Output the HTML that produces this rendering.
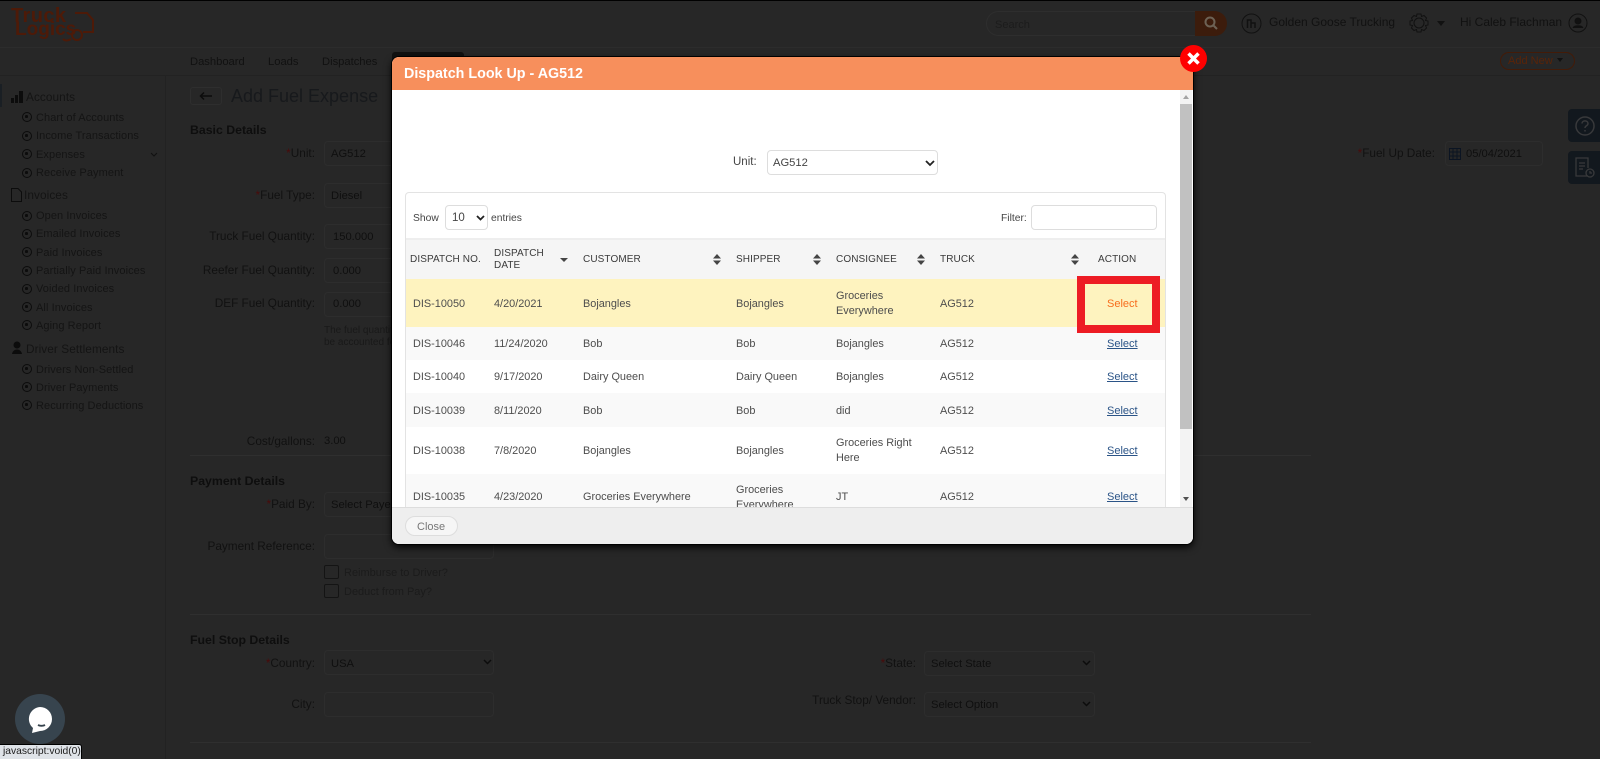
<!DOCTYPE html>
<html><head><meta charset="utf-8"><title>Dispatch Look Up</title>
<style>
html,body{margin:0;padding:0;width:1600px;height:759px;overflow:hidden;background:#272727}
body{position:relative;font-family:"Liberation Sans",sans-serif;font-size:12px;color:#111}
.a{position:absolute;box-sizing:border-box}
.t{position:absolute;white-space:nowrap;line-height:14px;font-size:11.5px;transform:translateY(1px)}
.r{text-align:right}
.f{position:absolute;box-sizing:border-box;border:1px solid #2d2d2d;border-radius:4px;height:25px}
.s{color:#141414;font-size:11px;letter-spacing:.08px}
.d{color:#0f0f0f;font-size:11.2px}
.g{color:#111;font-size:11.8px}
.h{color:#0e0e0e;font-weight:bold;font-size:12.3px}
.o{position:absolute;left:22px;width:10px;height:10px;border:1.5px solid #0c0c0c;border-radius:50%;box-sizing:border-box}
.o:after{content:"";position:absolute;left:2.2px;top:2.2px;width:2.6px;height:2.6px;background:#0c0c0c;border-radius:50%}
.l{position:absolute;height:1px;background:#2f2f2f}
.m{color:#4d4d4d;font-size:10.9px}
.th{color:#3a3a3a;font-size:10px;letter-spacing:.1px}
.sel{color:#2b5487;text-decoration:underline;font-size:11px}
.row{position:absolute;left:406px;width:759px}
</style></head><body>
<div class="a" style="left:0;top:0;width:1600px;height:1px;background:#000"></div>
<div class="l" style="left:0;top:47px;width:1600px;background:#2c2c2c"></div>
<div class="l" style="left:0;top:75px;width:1600px;background:#222"></div>
<div class="a" style="left:165px;top:75px;width:1px;height:684px;background:#222"></div>
<div class="a" style="left:0;top:84px;width:2px;height:23px;background:#1a1f24"></div>

<!-- logo -->
<svg class="a" style="left:8px;top:3px" width="90" height="42" viewBox="0 0 90 42" fill="none">
<path d="M67 10H79L85 17V29H75M55 36C57 38 60 38 63 36" stroke="#4d1a08" stroke-width="2"/>
<circle cx="69" cy="32" r="5" stroke="#4d1a08" stroke-width="2"/>
<text x="3" y="19" font-family="Liberation Sans" font-size="20" font-weight="bold" fill="#4d1a08" letter-spacing=".4">Truck</text>
<text x="7" y="32" font-family="Liberation Sans" font-size="19" font-weight="bold" fill="#4d1a08">Logics</text>
</svg>

<!-- header right -->
<div class="a" style="left:986px;top:11px;width:210px;height:25px;border:1px solid #2e2e2e;border-radius:13px 0 0 13px"></div>
<div class="t" style="left:995px;top:17px;color:#1c1c1c;font-size:11px">Search</div>
<div class="a" style="left:1195px;top:11px;width:32px;height:25px;background:#3c1c0c;border-radius:0 13px 13px 0"></div>
<svg class="a" style="left:1203px;top:15px" width="16" height="16" viewBox="0 0 16 16" fill="none" stroke="#6d6255" stroke-width="2"><circle cx="7" cy="7" r="4.500"/><path d="M10.500 10.500L14 14"/></svg>
<svg class="a" style="left:1241px;top:13px" width="21" height="21" viewBox="0 0 21 21" fill="none" stroke="#111"><circle cx="10.500" cy="10.500" r="9.500"/><path d="M6.500 15V7H10V15M10 10H14V15" stroke-width="1.500"/></svg>
<div class="t" style="left:1269px;top:14px;font-size:12px;color:#111">Golden Goose Trucking</div>
<svg class="a" style="left:1408px;top:12px" width="22" height="22" viewBox="0 0 22 22" fill="none" stroke="#111"><circle cx="11" cy="11" r="5"/><path d="M9 2H13L13.500 4.500L16 3.500L18.500 6L17.500 8.500L20 9V13L17.500 13.500L18.500 16L16 18.500L13.500 17.500L13 20H9L8.500 17.500L6 18.500L3.500 16L4.500 13.500L2 13V9L4.500 8.500L3.500 6L6 3.500L8.500 4.500Z"/></svg>
<div class="a" style="left:1437px;top:21px;border:4px solid transparent;border-top:5px solid #111"></div>
<div class="t" style="left:1460px;top:14px;font-size:12px;color:#111">Hi Caleb Flachman</div>
<svg class="a" style="left:1568px;top:13px" width="20" height="20" viewBox="0 0 20 20" fill="none" stroke="#111"><circle cx="10" cy="10" r="9"/><circle cx="10" cy="8" r="3" fill="#111"/><path d="M5 15C6 12 14 12 15 15" fill="#111"/></svg>

<!-- nav -->
<div class="t" style="left:190px;top:54px;color:#111;font-size:11.2px">Dashboard</div>
<div class="t" style="left:268px;top:54px;color:#111;font-size:11.2px">Loads</div>
<div class="t" style="left:322px;top:54px;color:#111;font-size:11.2px">Dispatches</div>
<div class="a" style="left:392px;top:52px;width:72px;height:23px;background:#111;border-radius:3px 3px 0 0"></div>
<div class="a" style="left:1500px;top:52px;width:75px;height:18px;border:1px solid #431b08;border-radius:9px"></div>
<div class="t" style="left:1508px;top:53px;color:#5a2408;font-size:11px">Add New</div>
<div class="a" style="left:1557px;top:58px;border:3.500px solid transparent;border-top:4px solid #111"></div>

<!-- sidebar -->
<svg class="a" style="left:11px;top:90px" width="13" height="13" viewBox="0 0 13 13" fill="#0c0c0c"><path d="M0 13V8H3V13ZM4 13V5H7V13ZM8 13V1H12V13Z"/></svg>
<div class="t s" style="left:26px;top:89px;font-size:11.800px">Accounts</div>
<i class="o" style="top:112px"></i><div class="t s" style="left:36px;top:110px">Chart of Accounts</div>
<i class="o" style="top:131px"></i><div class="t s" style="left:36px;top:128px">Income Transactions</div>
<i class="o" style="top:149px"></i><div class="t s" style="left:36px;top:147px">Expenses</div>
<svg class="a" style="left:150px;top:152px" width="8" height="6" fill="none" stroke="#111"><path d="M1 1L4 4L7 1"/></svg>
<i class="o" style="top:168px"></i><div class="t s" style="left:36px;top:165px">Receive Payment</div>
<svg class="a" style="left:11px;top:188px" width="11" height="14" fill="none" stroke="#0c0c0c"><path d="M.5.5H7L10.500 4V13.500H.5Z"/></svg>
<div class="t s" style="left:24px;top:187px;font-size:11.800px">Invoices</div>
<i class="o" style="top:211px"></i><div class="t s" style="left:36px;top:208px">Open Invoices</div>
<i class="o" style="top:229px"></i><div class="t s" style="left:36px;top:226px">Emailed Invoices</div>
<i class="o" style="top:247px"></i><div class="t s" style="left:36px;top:245px">Paid Invoices</div>
<i class="o" style="top:266px"></i><div class="t s" style="left:36px;top:263px">Partially Paid Invoices</div>
<i class="o" style="top:284px"></i><div class="t s" style="left:36px;top:281px">Voided Invoices</div>
<i class="o" style="top:302px"></i><div class="t s" style="left:36px;top:300px">All Invoices</div>
<i class="o" style="top:320px"></i><div class="t s" style="left:36px;top:318px">Aging Report</div>
<svg class="a" style="left:11px;top:341px" width="13" height="13" fill="#0c0c0c"><circle cx="6" cy="4" r="3.500"/><path d="M1 13C2 7 10 7 11 13Z"/></svg>
<div class="t s" style="left:26px;top:341px;font-size:11.800px">Driver Settlements</div>
<i class="o" style="top:364px"></i><div class="t s" style="left:36px;top:362px">Drivers Non-Settled</div>
<i class="o" style="top:382px"></i><div class="t s" style="left:36px;top:380px">Driver Payments</div>
<i class="o" style="top:400px"></i><div class="t s" style="left:36px;top:398px">Recurring Deductions</div>

<!-- form -->
<div class="a" style="left:190px;top:87px;width:32px;height:18px;border:1px solid #2e2e2e;border-radius:3px"></div>
<svg class="a" style="left:199px;top:91px" width="14" height="10" fill="none" stroke="#0c0c0c" stroke-width="1.500"><path d="M13 5H2M5 1.500L1.500 5L5 8.500"/></svg>
<div class="t" style="left:231px;top:84px;font-size:18px;line-height:22px;color:#17191c">Add Fuel Expense</div>
<div class="t h" style="left:190px;top:122px">Basic Details</div>

<div class="t g r" style="right:1285px;top:145px"><span style="color:#4a0b0b">*</span>Unit:</div><div class="f" style="left:324px;top:141px;width:170px"></div><div class="t d" style="left:331px;top:146px">AG512</div>
<div class="t g r" style="right:1285px;top:187px"><span style="color:#4a0b0b">*</span>Fuel Type:</div><div class="f" style="left:324px;top:183px;width:170px"></div><div class="t d" style="left:331px;top:188px">Diesel</div>
<div class="t g r" style="right:1285px;top:228px">Truck Fuel Quantity:</div><div class="f" style="left:324px;top:224px;width:170px"></div><div class="t d" style="left:333px;top:229px">150.000</div>
<div class="t g r" style="right:1285px;top:262px">Reefer Fuel Quantity:</div><div class="f" style="left:324px;top:258px;width:170px"></div><div class="t d" style="left:333px;top:263px">0.000</div>
<div class="t g r" style="right:1285px;top:295px">DEF Fuel Quantity:</div><div class="f" style="left:324px;top:292px;width:170px"></div><div class="t d" style="left:333px;top:296px">0.000</div>
<div class="t" style="left:324px;top:323px;font-size:10px;color:#191919">The fuel quantity</div>
<div class="t" style="left:324px;top:335px;font-size:10px;color:#191919">be accounted for</div>
<div class="t g r" style="right:1285px;top:433px">Cost/gallons:</div><div class="t d" style="left:324px;top:433px">3.00</div>
<div class="l" style="left:190px;top:455px;width:1121px"></div>
<div class="t h" style="left:190px;top:473px">Payment Details</div>
<div class="t g r" style="right:1285px;top:496px"><span style="color:#4a0b0b">*</span>Paid By:</div><div class="f" style="left:324px;top:492px;width:170px"></div><div class="t d" style="left:331px;top:497px">Select Payer</div>
<div class="t g r" style="right:1285px;top:538px">Payment Reference:</div><div class="f" style="left:324px;top:534px;width:170px"></div>
<div class="a" style="left:324px;top:565px;width:15px;height:14px;border:1px solid #141414;border-radius:2px"></div><div class="t" style="left:344px;top:565px;color:#1b1b1b;font-size:11px">Reimburse to Driver?</div>
<div class="a" style="left:324px;top:584px;width:15px;height:14px;border:1px solid #141414;border-radius:2px"></div><div class="t" style="left:344px;top:584px;color:#1b1b1b;font-size:11px">Deduct from Pay?</div>
<div class="l" style="left:190px;top:614px;width:1121px"></div>
<div class="t h" style="left:190px;top:632px">Fuel Stop Details</div>
<div class="t g r" style="right:1285px;top:655px"><span style="color:#4a0b0b">*</span>Country:</div><div class="f" style="left:324px;top:650px;width:170px"></div><div class="t d" style="left:331px;top:656px">USA</div>
<svg class="a" style="left:483px;top:659px" width="9" height="6" fill="none" stroke="#0c0c0c" stroke-width="1.500"><path d="M1 1L4.500 4.500L8 1"/></svg>
<div class="t g r" style="right:1285px;top:696px">City:</div><div class="f" style="left:324px;top:692px;width:170px"></div>
<div class="l" style="left:190px;top:742px;width:1121px"></div>
<div class="t g r" style="right:684px;top:655px"><span style="color:#4a0b0b">*</span>State:</div><div class="f" style="left:924px;top:651px;width:171px"></div><div class="t d" style="left:931px;top:656px">Select State</div>
<svg class="a" style="left:1082px;top:660px" width="9" height="6" fill="none" stroke="#0c0c0c" stroke-width="1.500"><path d="M1 1L4.500 4.500L8 1"/></svg>
<div class="t g r" style="right:684px;top:692px">Truck Stop/ Vendor:</div><div class="f" style="left:924px;top:692px;width:171px"></div><div class="t d" style="left:931px;top:697px">Select Option</div>
<svg class="a" style="left:1082px;top:701px" width="9" height="6" fill="none" stroke="#0c0c0c" stroke-width="1.500"><path d="M1 1L4.500 4.500L8 1"/></svg>
<div class="t g r" style="right:165px;top:145px"><span style="color:#4a0b0b">*</span>Fuel Up Date:</div><div class="f" style="left:1445px;top:141px;width:98px"></div>
<svg class="a" style="left:1449px;top:148px" width="12" height="12" fill="none" stroke="#0b1422"><path d="M.5.5H11.500V11.500H.5ZM.5 4H11.500M.5 8H11.500M4 .5V11.500M8 .5V11.500"/></svg>
<div class="t d" style="left:1466px;top:146px">05/04/2021</div>
<div class="a" style="left:1568px;top:109px;width:32px;height:33px;background:#12181e;border-radius:4px 0 0 4px"></div>
<svg class="a" style="left:1574px;top:115px" width="22" height="22" fill="none" stroke="#38393b" stroke-width="1.500"><circle cx="11" cy="11" r="9"/><path d="M8 8.500C8 5 14 5 14 8.500C14 11 11 10.500 11 13M11 15V16.500"/></svg>
<div class="a" style="left:1568px;top:151px;width:32px;height:33px;background:#12181e;border-radius:4px 0 0 4px"></div>
<svg class="a" style="left:1574px;top:157px" width="22" height="22" fill="none" stroke="#38393b" stroke-width="1.300"><path d="M14 19H2V1H14V11M5 6H11M5 9H11M5 12H9"/><circle cx="16" cy="16" r="4"/><path d="M16 14V16H18"/></svg>

<!-- chat -->
<div class="a" style="left:15px;top:694px;width:50px;height:50px;border-radius:50%;background:#37444e"></div>
<svg class="a" style="left:27px;top:706px" width="26" height="28" viewBox="0 0 26 28"><path d="M13 1A12 12 0 1 1 13 25L5 27L6 22A12 12 0 0 1 13 1Z" fill="#fff"/><path d="M11 19C13 20 16 20 18 19" stroke="#37444e" stroke-width="2" fill="none"/></svg>
<div class="a" style="left:0;top:744px;width:82px;height:15px;background:#dfe3e8;border:1px solid #000;border-left:0;border-bottom:0;border-radius:0 3px 0 0"></div>
<div class="t" style="left:3px;top:744px;font-size:10.300px;color:#1d1d1d">javascript:void(0)</div>

<!-- modal -->
<div class="a" style="left:392px;top:57px;width:801px;height:487px;background:#fff;border-radius:7px;box-shadow:0 0 0 1px #000,0 3px 8px #000;overflow:hidden">
 <div class="a" style="left:0;top:0;width:801px;height:33px;background:#f78f5c"></div>
</div>
<div class="t" style="left:404px;top:65px;color:#fff;font-weight:bold;font-size:14.300px;line-height:17px">Dispatch Look Up - AG512</div>

<div class="a" style="left:1180px;top:90px;width:12px;height:417px;background:#f3f3f3"></div>
<div class="a" style="left:1180px;top:104px;width:12px;height:325px;background:#c1c1c1"></div>
<div class="a" style="left:1183px;top:95px;border:3px solid transparent;border-bottom:4px solid #a3a3a3;border-top:0"></div>
<div class="a" style="left:1183px;top:497px;border:3px solid transparent;border-top:4px solid #505050;border-bottom:0"></div>

<div class="t" style="left:733px;top:154px;font-size:11.500px;color:#444">Unit:</div>
<div class="a" style="left:767px;top:150px;width:171px;height:25px;border:1px solid #ddd;border-radius:4px"></div>
<div class="t" style="left:773px;top:155px;font-size:11.200px;color:#444">AG512</div>
<svg class="a" style="left:925px;top:160px" width="10" height="7" fill="none" stroke="#222" stroke-width="1.800"><path d="M1 1L5 5L9 1"/></svg>

<div class="a" style="left:405px;top:192px;width:761px;height:315px;border:1px solid #e3e3e3;border-bottom:0;border-radius:4px 4px 0 0"></div>
<div class="t" style="left:413px;top:211px;font-size:10.300px;color:#444">Show</div>
<div class="a" style="left:445px;top:205px;width:43px;height:25px;border:1px solid #ddd;border-radius:4px"></div>
<div class="t" style="left:452px;top:210px;font-size:11.500px;color:#444">10</div>
<svg class="a" style="left:476px;top:215px" width="9" height="6" fill="none" stroke="#222" stroke-width="1.800"><path d="M1 1L4.500 4.500L8 1"/></svg>
<div class="t" style="left:491px;top:211px;font-size:10.300px;color:#444">entries</div>
<div class="t" style="left:1001px;top:211px;font-size:10.300px;color:#444">Filter:</div>
<div class="a" style="left:1031px;top:205px;width:126px;height:25px;border:1px solid #ddd;border-radius:4px"></div>

<div class="row" style="top:238px;height:41px;background:#f5f5f5;border-top:2px solid #eee"></div>
<div class="t th" style="left:410px;top:252px">DISPATCH NO.</div>
<div class="t th" style="left:494px;top:246px">DISPATCH</div>
<div class="t th" style="left:494px;top:258px">DATE</div>
<div class="a" style="left:560px;top:258px;border:4px solid transparent;border-top:4px solid #444;border-bottom:0"></div>
<div class="t th" style="left:583px;top:252px">CUSTOMER</div>
<div class="t th" style="left:736px;top:252px">SHIPPER</div>
<div class="t th" style="left:836px;top:252px">CONSIGNEE</div>
<div class="t th" style="left:940px;top:252px">TRUCK</div>
<div class="t th" style="left:1098px;top:252px">ACTION</div>
<svg class="a" style="left:713px;top:254px" width="8" height="11" fill="#444"><path d="M4 0L8 4.500H0ZM4 11L0 6.500H8Z"/></svg>
<svg class="a" style="left:813px;top:254px" width="8" height="11" fill="#444"><path d="M4 0L8 4.500H0ZM4 11L0 6.500H8Z"/></svg>
<svg class="a" style="left:917px;top:254px" width="8" height="11" fill="#444"><path d="M4 0L8 4.500H0ZM4 11L0 6.500H8Z"/></svg>
<svg class="a" style="left:1071px;top:254px" width="8" height="11" fill="#444"><path d="M4 0L8 4.500H0ZM4 11L0 6.500H8Z"/></svg>

<div class="row" style="top:279px;height:48px;background:#fef3bf"></div>
<div class="row" style="top:327px;height:33px;background:#f9f9f9"></div>
<div class="row" style="top:393px;height:34px;background:#f9f9f9"></div>
<div class="row" style="top:474px;height:33px;background:#f9f9f9"></div>

<div class="t m" style="left:413px;top:296px">DIS-10050</div><div class="t m" style="left:494px;top:296px">4/20/2021</div><div class="t m" style="left:583px;top:296px">Bojangles</div><div class="t m" style="left:736px;top:296px">Bojangles</div><div class="t m" style="left:836px;top:288px">Groceries</div><div class="t m" style="left:836px;top:303px">Everywhere</div><div class="t m" style="left:940px;top:296px">AG512</div><div class="t" style="left:1107px;top:296px;color:#f76d1d;font-size:11px">Select</div>

<div class="t m" style="left:413px;top:336px">DIS-10046</div><div class="t m" style="left:494px;top:336px">11/24/2020</div><div class="t m" style="left:583px;top:336px">Bob</div><div class="t m" style="left:736px;top:336px">Bob</div><div class="t m" style="left:836px;top:336px">Bojangles</div><div class="t m" style="left:940px;top:336px">AG512</div><div class="t sel" style="left:1107px;top:336px">Select</div>

<div class="t m" style="left:413px;top:369px">DIS-10040</div><div class="t m" style="left:494px;top:369px">9/17/2020</div><div class="t m" style="left:583px;top:369px">Dairy Queen</div><div class="t m" style="left:736px;top:369px">Dairy Queen</div><div class="t m" style="left:836px;top:369px">Bojangles</div><div class="t m" style="left:940px;top:369px">AG512</div><div class="t sel" style="left:1107px;top:369px">Select</div>

<div class="t m" style="left:413px;top:403px">DIS-10039</div><div class="t m" style="left:494px;top:403px">8/11/2020</div><div class="t m" style="left:583px;top:403px">Bob</div><div class="t m" style="left:736px;top:403px">Bob</div><div class="t m" style="left:836px;top:403px">did</div><div class="t m" style="left:940px;top:403px">AG512</div><div class="t sel" style="left:1107px;top:403px">Select</div>

<div class="t m" style="left:413px;top:443px">DIS-10038</div><div class="t m" style="left:494px;top:443px">7/8/2020</div><div class="t m" style="left:583px;top:443px">Bojangles</div><div class="t m" style="left:736px;top:443px">Bojangles</div><div class="t m" style="left:836px;top:435px">Groceries Right</div><div class="t m" style="left:836px;top:450px">Here</div><div class="t m" style="left:940px;top:443px">AG512</div><div class="t sel" style="left:1107px;top:443px">Select</div>

<div class="t m" style="left:413px;top:489px">DIS-10035</div><div class="t m" style="left:494px;top:489px">4/23/2020</div><div class="t m" style="left:583px;top:489px">Groceries Everywhere</div><div class="t m" style="left:736px;top:482px">Groceries</div><div class="t m" style="left:736px;top:497px">Everywhere</div><div class="t m" style="left:836px;top:489px">JT</div><div class="t m" style="left:940px;top:489px">AG512</div><div class="t sel" style="left:1107px;top:489px">Select</div>

<div class="a" style="left:1077px;top:276px;width:83px;height:57px;border:8px solid #ed1c24"></div>

<div class="a" style="left:392px;top:507px;width:801px;height:37px;background:#eee;border-top:1px solid #ddd;border-radius:0 0 7px 7px"></div>
<div class="a" style="left:405px;top:516px;width:53px;height:20px;background:#f6f6f6;border:1px solid #ddd;border-radius:10px"></div>
<div class="t" style="left:417px;top:519px;font-size:11px;color:#777">Close</div>

<svg class="a" style="left:1180px;top:45px" width="27" height="27" viewBox="0 0 27 27"><circle cx="13.500" cy="13.500" r="13.500" fill="#f00"/><path d="M8.500 8.500L18.500 18.500M18.500 8.500L8.500 18.500" stroke="#fff" stroke-width="3.500"/></svg>
</body></html>
